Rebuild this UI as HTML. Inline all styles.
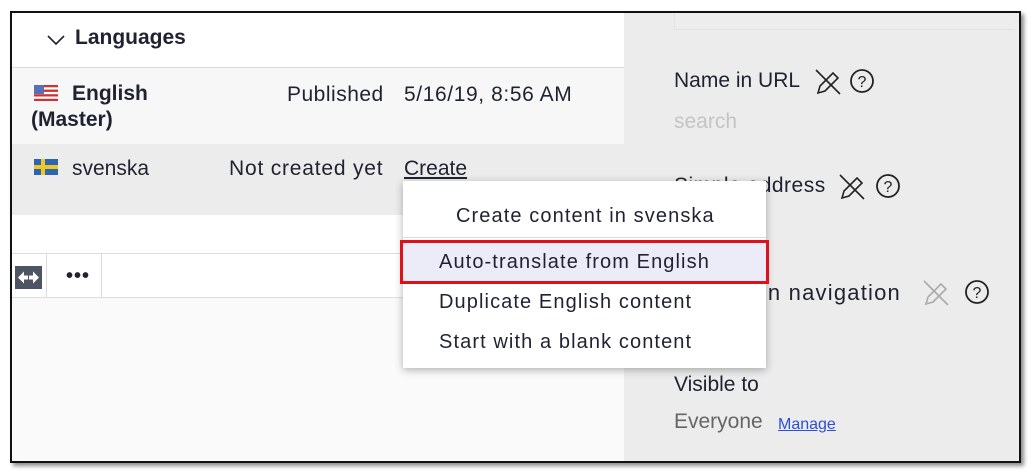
<!DOCTYPE html>
<html><head><meta charset="utf-8"><style>
*{margin:0;padding:0;box-sizing:border-box}
body{width:1032px;height:475px;background:#fff;position:relative;overflow:hidden;font-family:"Liberation Sans",sans-serif;color:#1f2230;font-size:20px}
.a{position:absolute;white-space:nowrap}
#frame{position:absolute;left:10px;top:11px;width:1011px;height:452px;border:2px solid #111;box-shadow:3px 3px 4px rgba(0,0,0,.45);overflow:hidden;background:#fff}
.m{letter-spacing:1.1px}
</style></head><body>
<div id="frame">
 <div class="a" style="left:0;top:0;width:612px;height:450px;background:#fafafa"></div>
 <div class="a" style="left:0;top:0;width:612px;height:240px;background:#fff"></div>
 <div class="a" style="left:0;top:54px;width:612px;height:1px;background:#dcdcdc"></div>
 <div class="a" style="left:0;top:55px;width:612px;height:76px;background:#f7f7f7"></div>
 <div class="a" style="left:0;top:131px;width:612px;height:71px;background:#ececec"></div>
 <div class="a" style="left:0;top:240px;width:612px;height:1px;background:#dcdcdc"></div>
 <div class="a" style="left:0;top:241px;width:612px;height:43px;background:#fff"></div>
 <div class="a" style="left:0;top:284px;width:612px;height:1px;background:#dcdcdc"></div>
 <div class="a" style="left:34px;top:241px;width:1px;height:43px;background:#dcdcdc"></div>
 <div class="a" style="left:89px;top:241px;width:1px;height:43px;background:#dcdcdc"></div>
 <svg class="a" style="left:3px;top:253px" width="27" height="23" viewBox="0 0 27 23"><rect width="27" height="23" fill="#4e5562"/><path d="M3 11.5l6-6v4h4v4H9v4z M24 11.5l-6-6v4h-4v4h4v4z" fill="#fff"/></svg>
 <div class="a" style="left:54px;top:258px;font-size:20px;letter-spacing:1px;font-weight:bold;line-height:10px">•••</div>
 <svg class="a" style="left:34px;top:21px" width="20" height="12"><path d="M2 2l8 8 8-8" stroke="#1f2230" stroke-width="1.6" fill="none"/></svg>
 <div class="a" style="left:63px;top:13px;font-size:21px;font-weight:bold">Languages</div>
 <svg class="a" style="left:22px;top:72px" width="24" height="16"><rect width="24" height="16" fill="#c33"/><rect y="2.3" width="24" height="2.3" fill="#fff"/><rect y="6.9" width="24" height="2.3" fill="#fff"/><rect y="11.5" width="24" height="2.3" fill="#fff"/><rect width="10" height="9" fill="#5a6fb5"/></svg>
 <div class="a" style="left:60px;top:69px;font-weight:bold;font-size:21px">English</div>
 <div class="a" style="left:19px;top:95px;font-weight:bold;font-size:21px">(Master)</div>
 <div class="a" style="left:275px;top:70px;font-size:21px;letter-spacing:.5px">Published</div>
 <div class="a" style="left:392px;top:70px;font-size:21px;letter-spacing:.6px">5/16/19, 8:56 AM</div>
 <svg class="a" style="left:22px;top:146px" width="24" height="16"><rect width="24" height="16" fill="#2a67b0"/><rect x="7" width="4" height="16" fill="#f2c624"/><rect y="6" width="24" height="4" fill="#f2c624"/></svg>
 <div class="a" style="left:60px;top:144px;font-size:21px">svenska</div>
 <div class="a" style="left:217px;top:144px;font-size:21px;letter-spacing:.8px">Not created yet</div>
 <div class="a" style="left:392px;top:144px;font-size:21px;text-decoration:underline">Create</div>

 <div class="a" style="left:612px;top:0;width:400px;height:450px;background:#ececec"></div>
 <div class="a" style="left:662px;top:0;width:340px;height:17px;border-left:1px solid #e2e2e2;border-bottom:1px solid #e2e2e2;background:#ededed"></div>
 <div class="a" style="left:662px;top:56px;font-size:21px">Name in URL</div>
 <div class="a" style="left:662px;top:97px;font-size:21px;color:#c4c4c4">search</div>
 <div class="a" style="left:662px;top:161px;font-size:21px;letter-spacing:.5px">Simple address</div>
 <div class="a" style="left:662px;top:267px;font-size:22px;letter-spacing:1.2px">Display in navigation</div>
 <div class="a" style="left:662px;top:360px;font-size:21px">Visible to</div>
 <div class="a" style="left:662px;top:397px;font-size:21px;color:#666">Everyone</div>
 <div class="a" style="left:766px;top:403px;font-size:16px;color:#2b4fd8;text-decoration:underline">Manage</div>
 <svg class="a" style="left:802px;top:55px" width="70" height="30"><g stroke="#222" stroke-width="1.6" fill="none"><path d="M2 2l24 24"/><path d="M4 25l2-7 13-13 5 5-13 13z"/></g><circle cx="48" cy="13" r="11" stroke="#222" stroke-width="1.8" fill="none"/><text x="48" y="19" font-size="16" text-anchor="middle" font-family="Liberation Sans" fill="#222">?</text></svg>
 <svg class="a" style="left:826px;top:160px" width="70" height="30"><g stroke="#222" stroke-width="1.6" fill="none"><path d="M2 2l24 24"/><path d="M4 25l2-7 13-13 5 5-13 13z"/></g><circle cx="50" cy="13" r="11" stroke="#222" stroke-width="1.8" fill="none"/><text x="50" y="19" font-size="16" text-anchor="middle" font-family="Liberation Sans" fill="#222">?</text></svg>
 <svg class="a" style="left:910px;top:266px" width="28" height="30"><g stroke="#aaa" stroke-width="1.6" fill="none"><path d="M2 2l24 24"/><path d="M4 25l2-7 13-13 5 5-13 13z"/></g></svg>
 <svg class="a" style="left:952px;top:266px" width="26" height="26"><circle cx="13" cy="13" r="11" stroke="#222" stroke-width="1.8" fill="none"/><text x="13" y="19" font-size="16" text-anchor="middle" font-family="Liberation Sans" fill="#222">?</text></svg>

 <div class="a" style="left:391px;top:168px;width:363px;height:187px;background:#fff;box-shadow:0 2px 8px rgba(0,0,0,.3)"></div>
 <div class="a" style="left:391px;top:224px;width:363px;height:1px;background:#ddd"></div>
 <div class="a" style="left:388px;top:227px;width:369px;height:44px;background:#ececf8;border:3px solid #e0101a"></div>
 <div class="a m" style="left:444px;top:192px">Create content in svenska</div>
 <div class="a m" style="left:427px;top:238px">Auto-translate from English</div>
 <div class="a m" style="left:427px;top:278px">Duplicate English content</div>
 <div class="a m" style="left:427px;top:318px">Start with a blank content</div>
</div>
</body></html>
